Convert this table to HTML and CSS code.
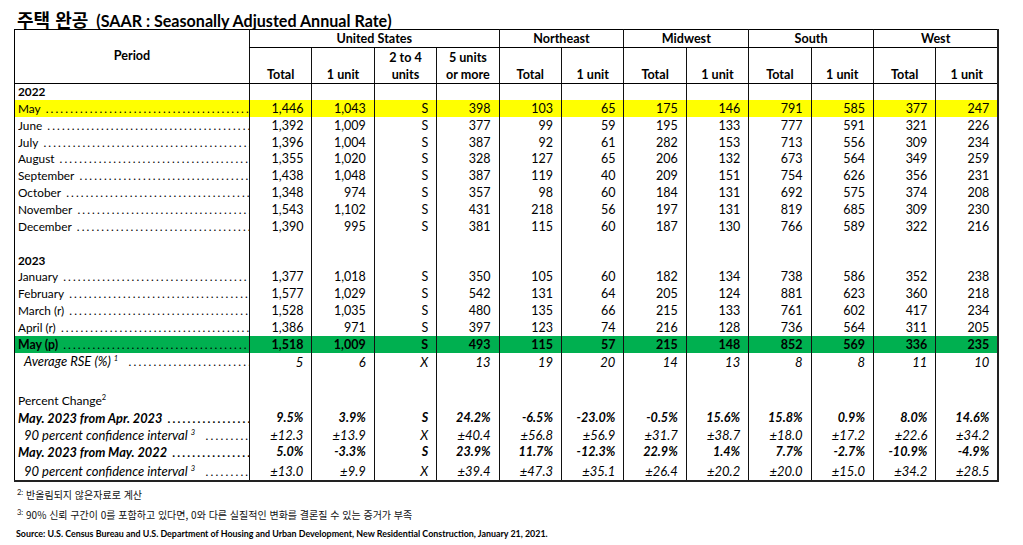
FILE: index.html
```html
<!DOCTYPE html>
<html lang="ko">
<head>
<meta charset="utf-8">
<title>주택 완공</title>
<link rel="stylesheet" href="styles.css">
</head>
<body>
<div class="page">
  <h1 class="title"><span class="ko">주택 완공</span><span class="en">(SAAR : Seasonally Adjusted Annual Rate)</span></h1>
  <table class="tbl">
    <colgroup><col class="cp"><col span="12" class="cd"></colgroup>
    <thead>
      <tr class="h1">
        <th rowspan="2" class="period">Period</th>
        <th colspan="4" class="grp">United States</th>
        <th colspan="2" class="grp">Northeast</th>
        <th colspan="2" class="grp">Midwest</th>
        <th colspan="2" class="grp">South</th>
        <th colspan="2" class="grp">West</th>
      </tr>
      <tr class="h2">
        <th>Total</th><th>1 unit</th><th>2 to 4<br>units</th><th>5 units<br>or more</th>
        <th>Total</th><th>1 unit</th><th>Total</th><th>1 unit</th>
        <th>Total</th><th>1 unit</th><th>Total</th><th>1 unit</th>
      </tr>
    </thead>
    <tbody>
      <tr class="r"><td class="lbl yr">2022</td><td></td><td></td><td></td><td></td><td></td><td></td><td></td><td></td><td></td><td></td><td></td><td></td></tr>
      <tr class="r hl-y"><td class="lbl"><div class="lead">May</div></td><td>1,446</td><td>1,043</td><td>S</td><td>398</td><td>103</td><td>65</td><td>175</td><td>146</td><td>791</td><td>585</td><td>377</td><td>247</td></tr>
      <tr class="r"><td class="lbl"><div class="lead">June</div></td><td>1,392</td><td>1,009</td><td>S</td><td>377</td><td>99</td><td>59</td><td>195</td><td>133</td><td>777</td><td>591</td><td>321</td><td>226</td></tr>
      <tr class="r"><td class="lbl"><div class="lead">July</div></td><td>1,396</td><td>1,004</td><td>S</td><td>387</td><td>92</td><td>61</td><td>282</td><td>153</td><td>713</td><td>556</td><td>309</td><td>234</td></tr>
      <tr class="r"><td class="lbl"><div class="lead">August</div></td><td>1,355</td><td>1,020</td><td>S</td><td>328</td><td>127</td><td>65</td><td>206</td><td>132</td><td>673</td><td>564</td><td>349</td><td>259</td></tr>
      <tr class="r"><td class="lbl"><div class="lead">September</div></td><td>1,438</td><td>1,048</td><td>S</td><td>387</td><td>119</td><td>40</td><td>209</td><td>151</td><td>754</td><td>626</td><td>356</td><td>231</td></tr>
      <tr class="r"><td class="lbl"><div class="lead">October</div></td><td>1,348</td><td>974</td><td>S</td><td>357</td><td>98</td><td>60</td><td>184</td><td>131</td><td>692</td><td>575</td><td>374</td><td>208</td></tr>
      <tr class="r"><td class="lbl"><div class="lead">November</div></td><td>1,543</td><td>1,102</td><td>S</td><td>431</td><td>218</td><td>56</td><td>197</td><td>131</td><td>819</td><td>685</td><td>309</td><td>230</td></tr>
      <tr class="r"><td class="lbl"><div class="lead">December</div></td><td>1,390</td><td>995</td><td>S</td><td>381</td><td>115</td><td>60</td><td>187</td><td>130</td><td>766</td><td>589</td><td>322</td><td>216</td></tr>
      <tr class="r"><td class="lbl"></td><td></td><td></td><td></td><td></td><td></td><td></td><td></td><td></td><td></td><td></td><td></td><td></td></tr>
      <tr class="r"><td class="lbl yr">2023</td><td></td><td></td><td></td><td></td><td></td><td></td><td></td><td></td><td></td><td></td><td></td><td></td></tr>
      <tr class="r"><td class="lbl"><div class="lead">January</div></td><td>1,377</td><td>1,018</td><td>S</td><td>350</td><td>105</td><td>60</td><td>182</td><td>134</td><td>738</td><td>586</td><td>352</td><td>238</td></tr>
      <tr class="r"><td class="lbl"><div class="lead">February</div></td><td>1,577</td><td>1,029</td><td>S</td><td>542</td><td>131</td><td>64</td><td>205</td><td>124</td><td>881</td><td>623</td><td>360</td><td>218</td></tr>
      <tr class="r"><td class="lbl"><div class="lead">March (r)</div></td><td>1,528</td><td>1,035</td><td>S</td><td>480</td><td>135</td><td>66</td><td>215</td><td>133</td><td>761</td><td>602</td><td>417</td><td>234</td></tr>
      <tr class="r"><td class="lbl"><div class="lead">April (r)</div></td><td>1,386</td><td>971</td><td>S</td><td>397</td><td>123</td><td>74</td><td>216</td><td>128</td><td>736</td><td>564</td><td>311</td><td>205</td></tr>
      <tr class="r hl-g"><td class="lbl"><div class="lead">May (p)</div></td><td>1,518</td><td>1,009</td><td>S</td><td>493</td><td>115</td><td>57</td><td>215</td><td>148</td><td>852</td><td>569</td><td>336</td><td>235</td></tr>
      <tr class="r it"><td class="lbl"><div class="lead ind gap">Average RSE (%)<sup class="s">1</sup></div></td><td>5</td><td>6</td><td>X</td><td>13</td><td>19</td><td>20</td><td>14</td><td>13</td><td>8</td><td>8</td><td>11</td><td>10</td></tr>
      <tr class="r sp"><td class="lbl"></td><td></td><td></td><td></td><td></td><td></td><td></td><td></td><td></td><td></td><td></td><td></td><td></td></tr>
      <tr class="r"><td class="lbl"><div class="plain">Percent Change<sup class="s2">2</sup></div></td><td></td><td></td><td></td><td></td><td></td><td></td><td></td><td></td><td></td><td></td><td></td><td></td></tr>
      <tr class="r bi"><td class="lbl"><div class="lead">May. 2023 from Apr. 2023</div></td><td>9.5%</td><td>3.9%</td><td>S</td><td>24.2%</td><td>-6.5%</td><td>-23.0%</td><td>-0.5%</td><td>15.6%</td><td>15.8%</td><td>0.9%</td><td>8.0%</td><td>14.6%</td></tr>
      <tr class="r it"><td class="lbl"><div class="lead ind gap">90 percent confidence interval<sup class="s">3</sup></div></td><td>±12.3</td><td>±13.9</td><td>X</td><td>±40.4</td><td>±56.8</td><td>±56.9</td><td>±31.7</td><td>±38.7</td><td>±18.0</td><td>±17.2</td><td>±22.6</td><td>±34.2</td></tr>
      <tr class="r bi"><td class="lbl"><div class="lead">May. 2023 from May. 2022</div></td><td>5.0%</td><td>-3.3%</td><td>S</td><td>23.9%</td><td>11.7%</td><td>-12.3%</td><td>22.9%</td><td>1.4%</td><td>7.7%</td><td>-2.7%</td><td>-10.9%</td><td>-4.9%</td></tr>
      <tr class="r it last"><td class="lbl"><div class="lead ind gap">90 percent confidence interval<sup class="s">3</sup></div></td><td>±13.0</td><td>±9.9</td><td>X</td><td>±39.4</td><td>±47.3</td><td>±35.1</td><td>±26.4</td><td>±20.2</td><td>±20.0</td><td>±15.0</td><td>±34.2</td><td>±28.5</td></tr>
    </tbody>
  </table>
  <div class="notes">
    <p class="note"><sup class="fn">2:</sup> 반올림되지 않은자료로 계산</p>
    <p class="note"><sup class="fn">3:</sup> 90% 신뢰 구간이 0를 포함하고 있다면, 0와 다른 실질적인 변화를 결론질 수 있는 증거가 부족</p>
    <p class="src">Source: U.S. Census Bureau and U.S. Department of Housing and Urban Development, New Residential Construction, January 21, 2021.</p>
  </div>
</div>
</body>
</html>
```

FILE: styles.css
```css
* { box-sizing: border-box; }
html, body { margin: 0; padding: 0; background: #fff; }
body {
  font-family: Lato, "Noto Sans CJK KR", sans-serif;
  color: #000;
}
.page { width: 1023px; height: 545px; overflow: hidden; }

.title {
  margin: 0;
  height: 29px;
  padding: 4px 0 0 17px;
  line-height: 22px;
  font-weight: 700;
  white-space: nowrap;
}
.title .ko {
  font-family: "Noto Sans CJK KR", sans-serif;
  font-size: 18px;
  font-weight: 700;
  margin-right: 8px;
}
.title .en {
  font-family: Lato, sans-serif;
  font-size: 16.1px;
  font-weight: 700;
}

.tbl {
  margin-left: 14px;
  width: 985px;
  table-layout: fixed;
  border-collapse: collapse;
  border: 1px solid #000;
  border-bottom: 2px solid #222;
  border-right: 2px solid #222;
  font-size: 12.5px;
}
.cp { width: 235px; }
.cd { width: 62.4px; }

.tbl th {
  font-weight: 700;
  font-size: 12.6px;
  line-height: 17px;
  padding: 0;
  text-align: center;
  border-left: 1px solid #111;
}
.h1 { height: 18px; }
.h1 .grp { border-bottom: 1px solid #000; vertical-align: middle; }
.h1 .period { vertical-align: top; padding-top: 17px; border-left: none; border-bottom: 1px solid #000; }
.h2 { height: 36px; }
.h2 th { vertical-align: bottom; border-bottom: 1px solid #000; }

.tbl td {
  padding: 0 8px 0 0;
  text-align: right;
  line-height: 16px;
  white-space: nowrap;
  border-left: 1px solid #111;
  overflow: hidden;
}
.r { height: 16.86px; }
.r.sp { height: 22.4px; }
.r.last { height: 20px; }
.r.last td { vertical-align: bottom; padding-bottom: 1px; }
.tbl td.lbl {
  text-align: left;
  padding: 0 0 0 3px;
  border-left: none;
  font-size: 11.8px;
}
.lbl.yr { font-weight: 700; }

.lead {
  white-space: nowrap;
  overflow: hidden;
}
.lead::after {
  content: " ..................................................................................................................";
  letter-spacing: 2.1px;
  font-style: normal;
  font-weight: 400;
  font-size: 11.8px;
}
.lead.gap::after {
  content: "\00a0\00a0 .................................................................................................";
  letter-spacing: 2.2px;
}
.bi .lead::after { font-weight: 700; font-style: normal; letter-spacing: 2.2px; }
.lead.ind { padding-left: 6px; }
.plain { white-space: nowrap; font-size: 12.1px; }

.s {
  font-size: 7.5px;
  vertical-align: 5px;
  line-height: 0;
  margin-left: 3px;
}
.s2 {
  font-size: 7.5px;
  vertical-align: 5px;
  line-height: 0;
}

.hl-y td { background: #ffff00; }
.hl-g td { background: #00b050; font-weight: 700; }
.tbl .hl-g td.lbl { font-size: 12.3px; }
.it td { font-style: italic; font-size: 13px; }
.tbl .it td.lbl { font-size: 13px; }
.bi td { font-style: italic; font-weight: 700; font-size: 12.6px; }
.tbl .bi td.lbl { font-size: 12.8px; }

.notes { padding-left: 17px; margin-top: 3px; }
.note {
  margin: 0;
  height: 20px;
  line-height: 20px;
  font-family: "Noto Sans CJK KR", sans-serif;
  font-size: 10px;
  font-weight: 400;
  color: #111;
  white-space: nowrap;
}
.fn {
  font-family: Lato, sans-serif;
  font-size: 7.5px;
  vertical-align: 4px;
  line-height: 0;
}
.src {
  margin: 0;
  height: 18px;
  line-height: 18px;
  font-size: 8.9px;
  font-weight: 700;
  white-space: nowrap;
  margin-left: -1px;
}
```
